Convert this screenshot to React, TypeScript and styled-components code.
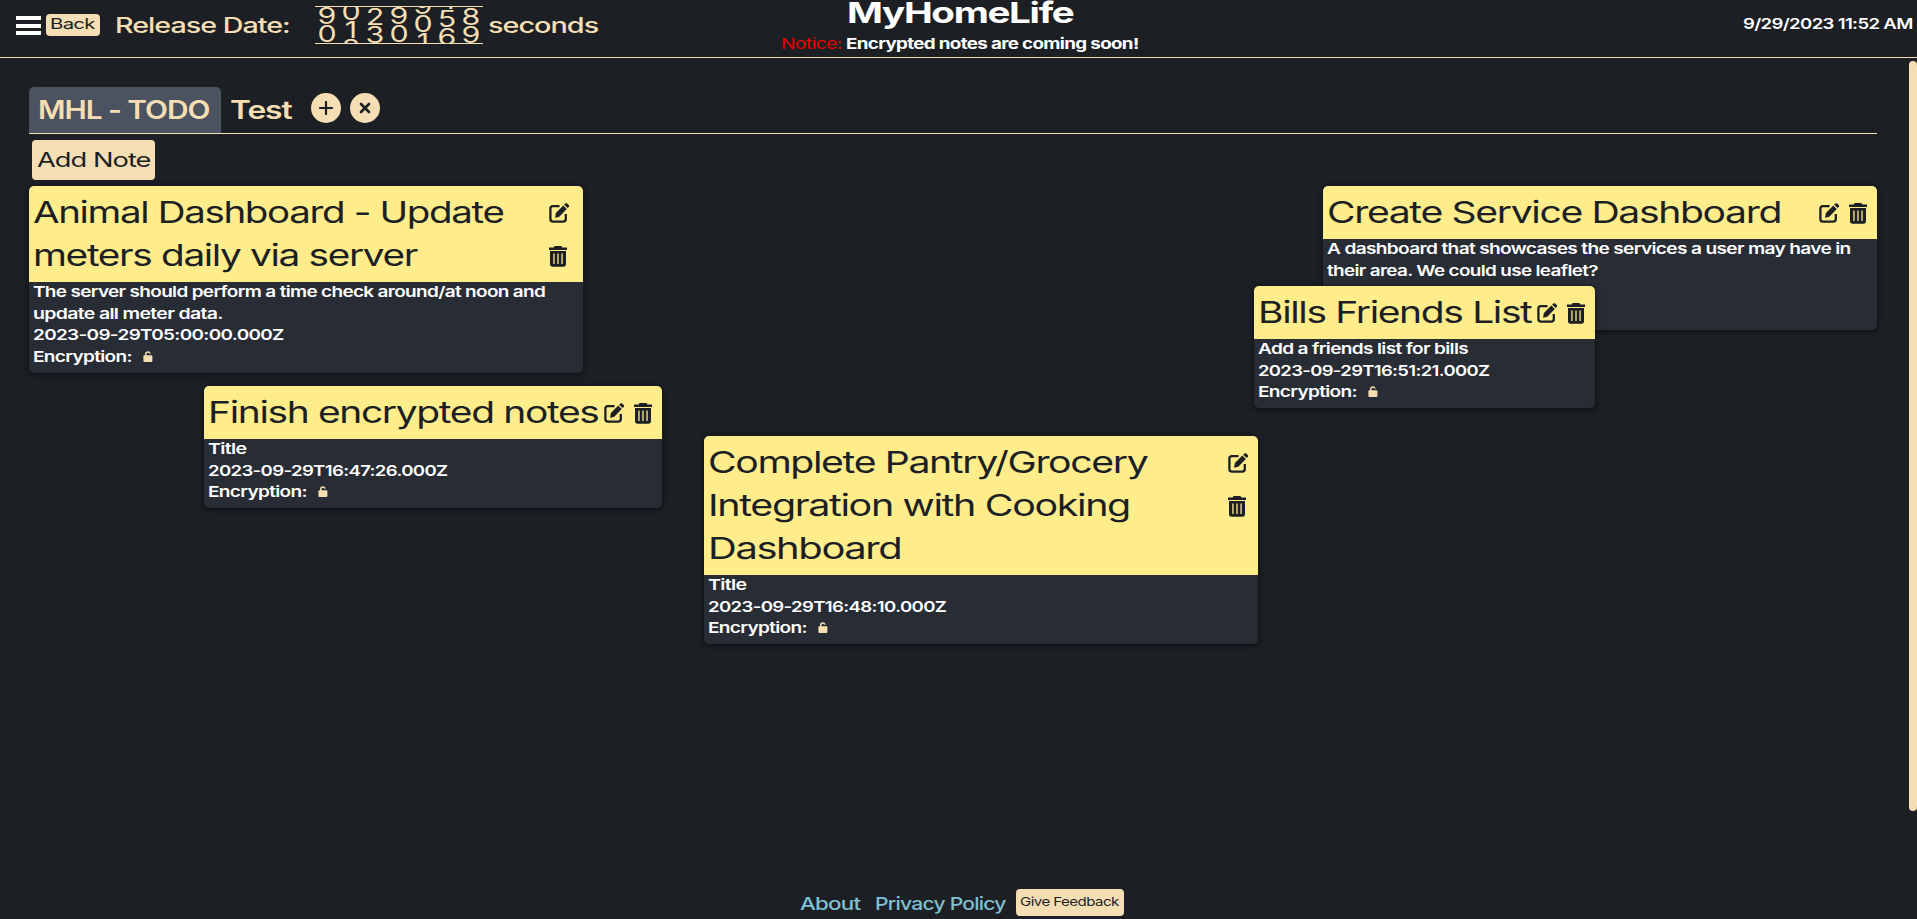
import React, { useLayoutEffect, useRef } from "react";
import styled, { createGlobalStyle } from "styled-components";

const ink = "#1c1f24";
const wheat = "#f5deb3";

const GlobalStyle = createGlobalStyle`
  * { box-sizing: border-box; }
  body {
    margin: 0;
    background: ${ink};
    color: #fff;
    font-family: Inter, "Liberation Sans", sans-serif;
    overflow: hidden;
  }
`;

/* Extended lettering: the text is stretched to the width it is given. */
const FitBox = styled.span<{ $w: number }>`
  display: block;
  flex: none;
  width: ${(p) => p.$w}px;
  white-space: nowrap;
  text-align: left;
  letter-spacing: -0.035em;
`;
const FitText = styled.span`
  display: inline-block;
  transform-origin: 0 50%;
`;

function Fit({ w, children }: { w: number; children: string }) {
  const ref = useRef<HTMLSpanElement>(null);
  useLayoutEffect(() => {
    const el = ref.current;
    if (el) el.style.transform = `scaleX(${w / el.offsetWidth})`;
  }, [w, children]);
  return (
    <FitBox $w={w}>
      <FitText ref={ref}>{children}</FitText>
    </FitBox>
  );
}

const Page = styled.div`
  height: 919px;
  display: flex;
  flex-direction: column;
`;

const Header = styled.header`
  height: 58px;
  flex: none;
  display: grid;
  grid-template-columns: 780px 360px 1fr;
  border-bottom: 1px solid ${wheat};
`;

const HeaderLeft = styled.div`
  display: flex;
  align-items: flex-start;
  padding-left: 16px;
  color: ${wheat};
`;

const Burger = styled.button`
  width: 25px;
  height: 19px;
  margin: 16px 5px 0 0;
  padding: 0;
  border: 0;
  background: none;
  display: flex;
  flex-direction: column;
  justify-content: space-between;
`;
const BurgerBar = styled.span`
  height: 4px;
  width: 100%;
  background: #fff;
`;

const Button = styled.button<{ $size: number; $w: number; $h: number; $lh: number }>`
  width: ${(p) => p.$w}px;
  height: ${(p) => p.$h}px;
  flex: none;
  display: flex;
  justify-content: center;
  align-items: flex-start;
  padding: 0 1px 0 0;
  border: 0;
  border-radius: 4px;
  background: ${wheat};
  color: ${ink};
  font: 400 ${(p) => p.$size}px/${(p) => p.$lh}px Inter, sans-serif;
`;
const BackSlot = styled.div`
  padding-top: 14px;
  margin-right: 15px;
`;

const Release = styled.div`
  font-size: 21.5px;
  font-weight: 500;
  line-height: 30px;
  padding-top: 10px;
`;

const Odometer = styled.div`
  width: 168px;
  height: 38px;
  margin: 6px 5px 0 25px;
  display: flex;
  overflow: hidden;
  border-top: 1px solid ${wheat};
  border-bottom: 1px solid ${wheat};
  font-size: 22.5px;
  line-height: 18px;
`;
const Reel = styled.div<{ $shift: number }>`
  width: 24px;
  flex: none;
  text-align: center;
  margin-top: ${(p) => p.$shift}px;
  transform: scaleX(1.35);
`;
const Digit = styled.div`
  height: 18px;
`;

const HeaderCenter = styled.div`
  display: flex;
  flex-direction: column;
  align-items: center;
`;
const SiteName = styled.h1`
  margin: 0 1px 0 0;
  font-size: 29px;
  font-weight: 700;
  line-height: 25px;
`;
const Notice = styled.div`
  display: flex;
  gap: 4px;
  margin-top: 8px;
  font-size: 15px;
  font-weight: 700;
  line-height: 22px;
`;
const NoticeLabel = styled.span`
  color: #e60000;
  font-weight: 400;
`;
const Clock = styled.div`
  justify-self: end;
  padding: 13px 5px 0 0;
  font-size: 15px;
  font-weight: 600;
  line-height: 21px;
`;

const Main = styled.main`
  flex: 1;
  display: flex;
  justify-content: space-between;
`;
const Content = styled.div`
  width: 1848px;
  margin-left: 29px;
  padding-top: 29px;
`;
const ScrollThumb = styled.div`
  width: 8px;
  height: 750px;
  margin-top: 3px;
  border-radius: 4px;
  background: ${wheat};
`;

const Tabs = styled.nav`
  height: 47px;
  display: flex;
  border-bottom: 1px solid ${wheat};
  color: ${wheat};
`;
const Tab = styled.div<{ $active?: boolean }>`
  height: 46px;
  padding: 0 ${(p) => (p.$active ? 11 : 10)}px 0 9px;
  border-radius: 5px 5px 0 0;
  background: ${(p) => (p.$active ? "#4b5260" : "transparent")};
  font-size: 25px;
  font-weight: 600;
  line-height: 47px;
`;
const RoundButton = styled.button`
  width: 30px;
  height: 30px;
  margin: 6px 9px 0 0;
  padding: 0;
  border: 0;
  border-radius: 50%;
  background: ${wheat};
  display: flex;
  align-items: center;
  justify-content: center;
`;
const TabActions = styled.div`
  display: flex;
  margin-left: 10px;
`;
const Toolbar = styled.div`
  padding: 6px 0 0 3px;
`;

const Board = styled.section`
  position: relative;
  height: 600px;
  margin-top: 6px;
`;
const Card = styled.article<{ $x: number; $y: number; $w: number; $h: number }>`
  position: absolute;
  left: ${(p) => p.$x}px;
  top: ${(p) => p.$y}px;
  width: ${(p) => p.$w}px;
  height: ${(p) => p.$h}px;
  border-radius: 5px;
  background: #282c34;
  box-shadow: 0 1px 5px 1px rgba(0, 0, 0, 0.45);
`;
const CardHead = styled.header`
  display: flex;
  justify-content: space-between;
  padding: 5px 5px 5px 4px;
  border-radius: 5px 5px 0 0;
  background: #ffec8b;
  color: ${ink};
`;
const CardTitle = styled.h2`
  margin: 0;
  font-size: 30px;
  font-weight: 400;
  line-height: 43px;
`;
const CardTools = styled.div<{ $stacked: boolean; $inset: number }>`
  display: flex;
  flex-direction: ${(p) => (p.$stacked ? "column" : "row")};
  gap: ${(p) => (p.$stacked ? 0 : 9)}px;
  padding-right: ${(p) => p.$inset}px;
`;
const Tool = styled.span`
  width: 21px;
  height: 43px;
  display: flex;
  align-items: center;
  padding-top: 1px;
`;
const CardBody = styled.div`
  margin-top: -0.75px;
  padding-left: 4px;
  font-size: 15px;
  font-weight: 600;
  line-height: 21.5px;
`;
const LockRow = styled.div`
  display: flex;
  align-items: center;
  gap: 11px;
`;

const EditIcon = () => (
  <svg width="21" height="20" viewBox="0 0 21 20">
    <path d="M10.5 3.2H4Q1.4 3.2 1.4 5.8V16Q1.4 18.6 4 18.6H14.2Q16.8 18.6 16.8 16V11" fill="none" stroke={ink} strokeWidth="2.3" />
    <path d="M6 14.8l.9-4.700 7.400-7.600 3.500 3.500-7.500 7.700zM15.200 1.700l1.100-1.100q1-.9 2 0l1.400 1.400q.9 1 0 2l-1.100 1.100z" fill={ink} />
  </svg>
);
const TrashIcon = () => (
  <svg width="18" height="21" viewBox="0 0 18 21">
    <path d="M5.500 0h7l.8 1.600H18v2.300H0V1.600h4.700z" fill={ink} />
    <path fillRule="evenodd" d="M1 5h16v13q0 2.800-2.600 2.800H3.600Q1 20.800 1 18zM4.300 7.500v10.500h1.300V7.500zM8.350 7.500v10.500h1.300V7.500zM12.400 7.500v10.500h1.300V7.500z" fill={ink} />
  </svg>
);
const LockIcon = () => (
  <svg width="10" height="12" viewBox="0 0 10 12">
    <path d="M2.700 6V3.200Q2.800 1 4.900 1 6.600 1 7.100 2.600" fill="none" stroke={wheat} strokeWidth="1.400" />
    <rect x=".4" y="4.300" width="9" height="6.700" rx="1" fill={wheat} />
  </svg>
);

type Line = [string, number];
interface Note {
  x: number;
  y: number;
  w: number;
  h: number;
  inset: number;
  encryption?: boolean;
  title: Line[];
  body: Line[];
}

const notes: Note[] = [
  {
    x: 0, y: 0, w: 554, h: 187, inset: 8, encryption: true,
    title: [["Animal Dashboard - Update", 471], ["meters daily via server", 384]],
    body: [
      ["The server should perform a time check around/at noon and", 512],
      ["update all meter data.", 190],
      ["2023-09-29T05:00:00.000Z", 251],
    ],
  },
  {
    x: 175, y: 200, w: 458, h: 122, inset: 2, encryption: true,
    title: [["Finish encrypted notes", 391]],
    body: [["Title", 38], ["2023-09-29T16:47:26.000Z", 239]],
  },
  {
    x: 675, y: 250, w: 554, h: 208, inset: 4, encryption: true,
    title: [["Complete Pantry/Grocery", 439], ["Integration with Cooking", 422], ["Dashboard", 193]],
    body: [["Title", 38], ["2023-09-29T16:48:10.000Z", 238]],
  },
  {
    x: 1294, y: 0, w: 554, h: 144, inset: 2,
    title: [["Create Service Dashboard", 454]],
    body: [
      ["A dashboard that showcases the services a user may have in", 524],
      ["their area. We could use leaflet?", 271],
    ],
  },
  {
    x: 1225, y: 100, w: 341, h: 122, inset: 2, encryption: true,
    title: [["Bills Friends List", 273]],
    body: [["Add a friends list for bills", 210], ["2023-09-29T16:51:21.000Z", 231]],
  },
];

const reels: { digits: string; shift: number }[] = [
  { digits: "90", shift: 0 },
  { digits: "012", shift: -4 },
  { digits: "23", shift: 1 },
  { digits: "90", shift: 0 },
  { digits: "901", shift: -10 },
  { digits: "456", shift: -15 },
  { digits: "89", shift: 1 },
];

const Footer = styled.footer`
  height: 30px;
  flex: none;
  display: flex;
  padding-left: 800px;
  font-size: 17.5px;
  font-weight: 500;
  line-height: 29px;
  color: #7fc0d2;
`;
const FooterLink = styled.a<{ $gap: number }>`
  margin-right: ${(p) => p.$gap}px;
`;

function NoteCard({ note }: { note: Note }) {
  return (
    <Card $x={note.x} $y={note.y} $w={note.w} $h={note.h}>
      <CardHead>
        <CardTitle>
          {note.title.map(([text, w]) => <Fit key={text} w={w}>{text}</Fit>)}
        </CardTitle>
        <CardTools $stacked={note.title.length > 1} $inset={note.inset}>
          <Tool><EditIcon /></Tool>
          <Tool><TrashIcon /></Tool>
        </CardTools>
      </CardHead>
      <CardBody>
        {note.body.map(([text, w]) => <Fit key={text} w={w}>{text}</Fit>)}
        {note.encryption && (
          <LockRow><Fit w={99}>Encryption:</Fit><LockIcon /></LockRow>
        )}
      </CardBody>
    </Card>
  );
}

export default function App() {
  return (
    <Page>
      <GlobalStyle />
      <Header>
        <HeaderLeft>
          <Burger aria-label="Menu"><BurgerBar /><BurgerBar /><BurgerBar /></Burger>
          <BackSlot>
            <Button $size={14.5} $w={54} $h={22} $lh={19}><Fit w={45}>Back</Fit></Button>
          </BackSlot>
          <Release><Fit w={175}>Release Date:</Fit></Release>
          <Odometer>
            {reels.map((r, i) => (
              <Reel key={i} $shift={r.shift}>
                {r.digits.split("").map((d) => <Digit key={d}>{d}</Digit>)}
              </Reel>
            ))}
          </Odometer>
          <Release><Fit w={110}>seconds</Fit></Release>
        </HeaderLeft>
        <HeaderCenter>
          <SiteName><Fit w={226}>MyHomeLife</Fit></SiteName>
          <Notice>
            <NoticeLabel><Fit w={61}>Notice:</Fit></NoticeLabel>
            <Fit w={293}>Encrypted notes are coming soon!</Fit>
          </Notice>
        </HeaderCenter>
        <Clock><Fit w={169.5}>9/29/2023 11:52 AM</Fit></Clock>
      </Header>
      <Main>
        <Content>
          <Tabs>
            <Tab $active><Fit w={172}>MHL - TODO</Fit></Tab>
            <Tab><Fit w={61}>Test</Fit></Tab>
            <TabActions>
              <RoundButton aria-label="Add tab">
                <svg width="14" height="14" viewBox="0 0 14 14"><path d="M7 1v12M1 7h12" stroke={ink} strokeWidth="2.2" strokeLinecap="round" /></svg>
              </RoundButton>
              <RoundButton aria-label="Close tab">
                <svg width="12" height="12" viewBox="0 0 12 12"><path d="M2 2l8 8M10 2l-8 8" stroke={ink} strokeWidth="2.6" strokeLinecap="round" /></svg>
              </RoundButton>
            </TabActions>
          </Tabs>
          <Toolbar>
            <Button $size={20} $w={123} $h={40} $lh={40}><Fit w={113}>Add Note</Fit></Button>
          </Toolbar>
          <Board>
            {notes.map((n) => <NoteCard key={n.title[0][0]} note={n} />)}
          </Board>
        </Content>
        <ScrollThumb />
      </Main>
      <Footer>
        <FooterLink $gap={15}><Fit w={60}>About</Fit></FooterLink>
        <FooterLink $gap={10}><Fit w={131}>Privacy Policy</Fit></FooterLink>
        <Button $size={12.3} $w={108} $h={27} $lh={26}><Fit w={99}>Give Feedback</Fit></Button>
      </Footer>
    </Page>
  );
}
